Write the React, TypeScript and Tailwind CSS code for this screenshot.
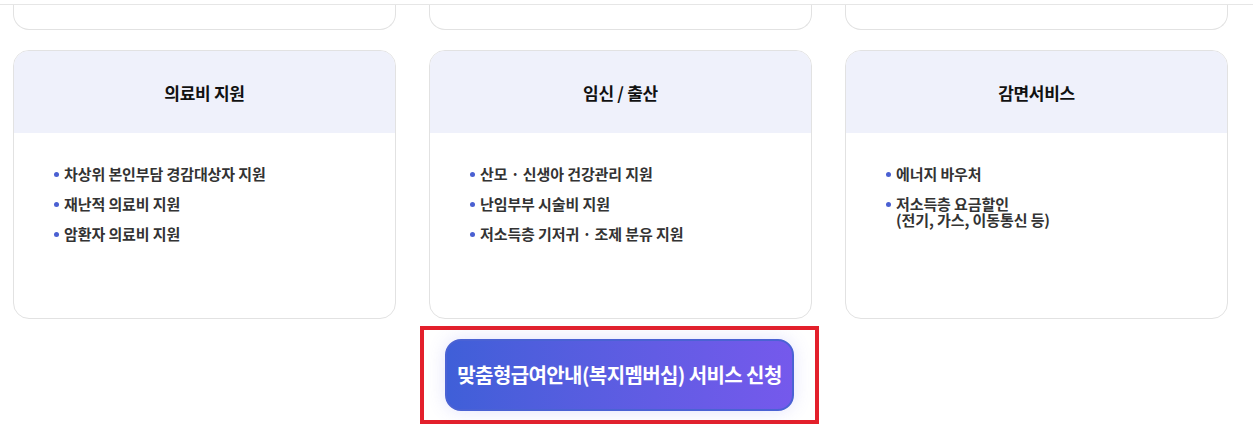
import React from "react";

const cards = [
  {
    title: "의료비 지원",
    items: [["차상위 본인부담 경감대상자 지원"], ["재난적 의료비 지원"], ["암환자 의료비 지원"]],
  },
  {
    title: "임신 / 출산",
    items: [["산모 · 신생아 건강관리 지원"], ["난임부부 시술비 지원"], ["저소득층 기저귀 · 조제 분유 지원"]],
  },
  {
    title: "감면서비스",
    items: [["에너지 바우처"], ["저소득층 요금할인", "(전기, 가스, 이동통신 등)"]],
  },
];

export default function App() {
  return (
    <div
      className="w-[1253px] h-[443px] bg-white overflow-hidden"
      style={{ fontFamily: '"Noto Sans CJK KR", "Noto Sans", sans-serif' }}
    >
      <div className="h-[5px] border-b border-[#e6e6e6]" />

      {/* previous row, cut off */}
      <div className="flex gap-[33px] px-[13px]">
        {cards.map((c) => (
          <div
            key={c.title}
            className="w-[383px] h-[25px] border-x border-b border-[#e2e2e2] rounded-b-2xl"
          />
        ))}
      </div>

      {/* cards */}
      <div className="flex gap-[33px] px-[13px] mt-[20px]">
        {cards.map((c) => (
          <div
            key={c.title}
            className="w-[383px] h-[269px] border border-[#e2e2e2] rounded-2xl overflow-hidden"
          >
            <div className="h-[82px] bg-[#eff1fb] flex items-center justify-center pt-[2px]">
              <p className="text-[17px] font-bold text-[#111] tracking-[-0.3px]">{c.title}</p>
            </div>
            <ul className="pt-[33px] pl-[40px] flex flex-col gap-[14px]">
              {c.items.map((lines) => (
                <li
                  key={lines[0]}
                  className="flex gap-[5px] text-[15px] leading-[16px] font-semibold text-[#333] tracking-[-0.1px]"
                >
                  <span className="mt-[6px] w-[5px] h-[5px] rounded-full bg-[#4a60d2] shrink-0" />
                  <span>
                    {lines.map((l, i) => (
                      <span key={i} className="block">
                        {l}
                      </span>
                    ))}
                  </span>
                </li>
              ))}
            </ul>
          </div>
        ))}
      </div>

      {/* apply button */}
      <div className="flex justify-center mt-[7px] pr-[14px]">
        <div className="border-4 border-[#e3202b] px-[21px] pt-[9px] pb-[9px]">
          <button className="w-[349px] h-[72px] rounded-2xl border-2 border-[#4a62d4] bg-gradient-to-r from-[#3f5fd8] to-[#7559ec] text-white text-[20px] font-bold tracking-[-0.6px] shadow-[0_0_18px_rgba(99,102,241,0.18)]">
            맞춤형급여안내(복지멤버십) 서비스 신청
          </button>
        </div>
      </div>
    </div>
  );
}
